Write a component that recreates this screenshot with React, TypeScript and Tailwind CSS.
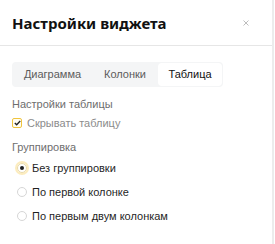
import { useState } from 'react'

const tabs = [
  { name: 'Диаграмма', width: 'w-[79px]' },
  { name: 'Колонки', width: 'w-[66px]' },
  { name: 'Таблица', width: 'w-[64px]' },
]
const groupings = ['Без группировки', 'По первой колонке', 'По первым двум колонкам']

const App = () => {
  const [tab, setTab] = useState('Таблица')
  const [hide, setHide] = useState(true)
  const [group, setGroup] = useState(0)

  return (
    <div className="w-[275px] h-[244px] bg-white font-['Liberation_Sans',Arial,sans-serif] text-[11px] text-[#1f1f1f]">
      <div className="w-[274px] h-full border-r-2 border-[#ececec] flex flex-col">
        <header className="h-[46px] shrink-0 border-b border-[#e6e6e6] flex items-center justify-between pl-3 pr-[23px]">
          <h2 className="font-['Noto_Sans',sans-serif] text-[15px] font-bold leading-none text-[#111] mt-px">
            Настройки виджета
          </h2>
          <button className="w-[7px] h-[7px] flex items-center justify-center">
            <svg width="6" height="6" viewBox="0 0 6 6">
              <path d="M0.5 0.5 L5.5 5.5 M5.5 0.5 L0.5 5.5" stroke="#bdbdbd" strokeWidth="1" />
            </svg>
          </button>
        </header>

        <div className="px-3 pt-4">
          <div className="flex w-[211px] h-[25px] bg-[#f4f5f6] rounded-[4px] p-px">
            {tabs.map((t) => (
              <button
                key={t.name}
                onClick={() => setTab(t.name)}
                className={`${t.width} h-full leading-none rounded-[4px] ${
                  tab === t.name ? 'bg-white text-[#111]' : 'text-[#5c5c5c]'
                }`}
              >
                {t.name}
              </button>
            ))}
          </div>

          <p className="mt-[9px] leading-[16px] text-[#6e6e6e]">Настройки таблицы</p>
          <label className="mt-px flex items-center gap-[5px] h-[20px]">
            <span
              onClick={() => setHide(!hide)}
              className="w-[10px] h-[10px] rounded-[2px] border border-[#f0c43c] bg-[#fffdf3] flex items-center justify-center"
            >
              {hide && (
                <svg width="7" height="6" viewBox="0 0 7 6">
                  <path d="M0.8 3 L2.7 4.8 L6.2 1" fill="none" stroke="#222" strokeWidth="1.3" />
                </svg>
              )}
            </span>
            <span className="text-[#8c8c8c]">Скрывать таблицу</span>
          </label>

          <p className="mt-[6px] leading-[16px] text-[#6e6e6e]">Группировка</p>
          <div className="flex flex-col mt-px">
            {groupings.map((g, i) => (
              <label
                key={g}
                onClick={() => setGroup(i)}
                className="flex items-center gap-[5px] h-[24px] pl-[5px]"
              >
                <span
                  className={`w-[10px] h-[10px] rounded-full border flex items-center justify-center ${
                    group === i
                      ? 'border-[#e9d9a8] shadow-[0_0_0_2px_rgba(245,200,70,0.35)]'
                      : 'border-[#d6d6d6]'
                  }`}
                >
                  {group === i && <span className="w-[4px] h-[4px] rounded-full bg-[#222]" />}
                </span>
                <span className="text-[#1f1f1f]">{g}</span>
              </label>
            ))}
          </div>
        </div>
      </div>
    </div>
  )
}

export default App
